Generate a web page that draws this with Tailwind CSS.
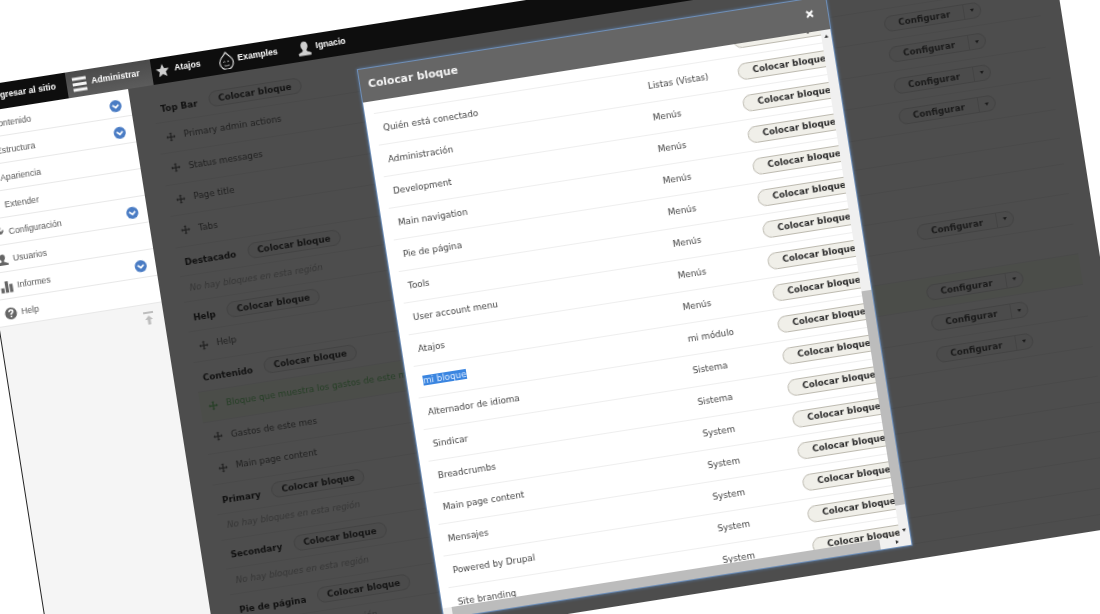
<!DOCTYPE html>
<html lang="en">
<head>
    <meta charset="UTF-8">
    <title>Bloques</title>
    <script src="https://cdn.jsdelivr.net/npm/@tailwindcss/browser@4"></script>
</head>
<body class="bg-white overflow-hidden w-[1100px] h-[614px] relative">
    <div id="page" class="absolute left-[-39px] top-[89px] w-[1099px] h-[613px] origin-top-left rotate-[-8.95deg] blur-[0.25px] flex flex-col [font-family:'DejaVu_Sans',sans-serif]">
        <!-- toolbar -->
        <div class="h-[26px] shrink-0 bg-[#0e0e0e] flex items-stretch text-white font-bold text-[8.7px] [font-family:'Liberation_Sans',sans-serif]">
            <div class="w-[105px] flex items-center justify-end pr-[11px]">Regresar al sitio</div>
            <div class="w-[86px] flex items-center pl-[6px] gap-[5px] bg-gradient-to-b from-[#4a4a4a] to-[#5c5c5c]">
                <svg class="w-[14px] h-[15px]" viewBox="0 0 14 15" fill="#f2f2f2"><rect x="0" y="0.500" width="14" height="3"/><rect x="0" y="6" width="14" height="3"/><rect x="0" y="11.500" width="14" height="3"/></svg>
                <span>Administrar</span>
            </div>
            <div class="w-[64px] flex items-center pl-[4px] gap-[5px]">
                <svg class="w-[14px] h-[14px]" viewBox="0 0 24 24" fill="#cfcfcf"><path d="M12 1l3.300 7.400 8 .8-6 5.400 1.800 7.900L12 18.400l-7.100 4.100 1.800-7.900-6-5.400 8-.8z"/></svg>
                <span>Atajos</span>
            </div>
            <div class="w-[78px] flex items-center pl-[4px] gap-[4px]">
                <svg class="w-[15px] h-[18px]" viewBox="0 0 20 24" fill="none" stroke="#e6e6e6" stroke-width="1.500"><path d="M10 1c1 4 9 7 9 14a9 9 0 0 1-18 0c0-7 8-10 9-14z"/><path d="M5.500 14.500c1-1.500 2-1.500 3-.7M11 13.500h2.500M6.500 18.500c2 1 4.500 1 7 0" stroke-width="1"/></svg>
                <span>Examples</span>
            </div>
            <div class="flex items-center pl-[6px] gap-[5px]">
                <svg class="w-[13px] h-[15px]" viewBox="0 0 24 26" fill="#cfcfcf"><path d="M12 0c4.500 0 6.500 3.500 6.500 8 0 3-1.700 5.500-3 7.500 0 2.500 1 3.500 8 6v4.500H.5v-4.500c7-2.500 8-3.500 8-6-1.300-2-3-4.500-3-7.500 0-4.500 2-8 6.500-8z"/></svg>
                <span>Ignacio</span>
            </div>
        </div>

        <div class="flex flex-1 min-h-0">
            <!-- admin tray -->
            <div class="w-[165px] shrink-0 bg-[#f5f5f5] border-l border-[#222] flex flex-col">
                <div id="tray" class="bg-white text-[8.7px] text-[#565656] [font-family:'Liberation_Sans',sans-serif]"></div>
                <div class="flex justify-end pr-[10px] pt-[7px]">
                    <svg class="w-[10px] h-[14px]" viewBox="0 0 10 14" fill="#bdbdbd"><rect x="0" y="0" width="10" height="2"/><path d="M5 4l4 4H6.500v5h-3V8H1z"/></svg>
                </div>
            </div>
            <!-- block layout behind the overlay -->
            <div id="regions" class="flex-1 bg-[#4d4d4d] pl-[22px] pr-[21px] pt-[9px] text-[8.8px] text-[#1f1f1f]"></div>
        </div>

        <!-- dialog -->
        <div class="absolute left-[394px] top-[42px] w-[475px] h-[557px] flex flex-col bg-white border border-[#6f8fb8] shadow-[0_0_3px_#5b7ba6]">
            <div class="h-[33px] shrink-0 bg-[#666] flex items-center justify-between pl-[8px] pr-[14px] relative z-10">
                <span class="text-[10.8px] font-bold text-[#f5f5f5]">Colocar bloque</span>
                <svg class="w-[8px] h-[8px] mb-[3px]" viewBox="0 0 8 8" stroke="#fff" stroke-width="2"><path d="M1 1l6 6M7 1L1 7"/></svg>
            </div>
            <div class="flex flex-1 min-h-0">
                <div class="flex-1 min-w-0 overflow-hidden">
                    <div id="rows" class="mt-[-19px] ml-[9px] text-[8.8px] text-[#444]"></div>
                </div>
                <div class="w-[10px] shrink-0 bg-[#f0f0f0] flex flex-col">
                    <div class="h-[12px] flex items-center justify-center"><div class="border-x-[2.5px] border-b-[3px] border-x-transparent border-b-[#333]"></div></div>
                    <div class="h-[252px]"></div>
                    <div class="h-[217px] bg-[#bcbcbc]"></div>
                    <div class="flex-1"></div>
                    <div class="h-[12px] flex items-center justify-center"><div class="border-x-[2.5px] border-t-[3px] border-x-transparent border-t-[#333]"></div></div>
                </div>
            </div>
            <div class="h-[10px] shrink-0 bg-[#f0f0f0] flex">
                <div class="w-[9px]"></div>
                <div class="w-[433px] bg-[#bcbcbc]"></div>
                <div class="flex-1 flex items-center justify-end pr-[2px]"><div class="border-y-[2.5px] border-l-[3px] border-y-transparent border-l-[#333]"></div></div>
                <div class="w-[10px]"></div>
            </div>
        </div>
    </div>

    <script>
        const iconPaths = {
            content: 'M4 2h16v20H4z',
            wrench: 'M21 6l-4 4-3-3 4-4a6 6 0 0 0-8 8L2 19l3 3 8-8a6 6 0 0 0 8-8z',
            user: 'M12 2c4 0 5 3 5 6s-2 5-3 6c0 2 1 2 8 5v3H2v-3c7-3 8-3 8-5-1-1-3-3-3-6s1-6 5-6z',
            bars: 'M1 14h6v9H1zM9 2h6v21H9zM17 8h6v15h-6z',
            help: 'M12 1a11 11 0 1 0 0 22 11 11 0 0 0 0-22zm1.500 18h-3v-3h3zm2.200-7.600c-1.200 1-2.200 1.600-2.200 3.100h-3c0-2.700 1.300-3.500 2.500-4.500.8-.6 1.200-1 1.200-1.800 0-.9-.7-1.500-1.800-1.500S10.600 7.400 10.500 9h-3c.1-3 2-4.900 5-4.900 2.800 0 4.800 1.600 4.800 4 0 1.500-.7 2.400-1.600 3.300z'
        };

        const trayItems = [
            { label: 'Contenido', icon: 'content', more: true },
            { label: 'Estructura', icon: 'bars', more: true },
            { label: 'Apariencia', icon: 'content' },
            { label: 'Extender', icon: 'content' },
            { label: 'Configuración', icon: 'wrench', more: true },
            { label: 'Usuarios', icon: 'user' },
            { label: 'Informes', icon: 'bars', more: true },
            { label: 'Help', icon: 'help' }
        ];

        document.getElementById('tray').innerHTML = trayItems.map(item => `
            <div class="h-[27px] flex items-center pl-[7px] pr-[9px] pt-[3px] gap-[4px] border-b border-[#e8e8e8]">
                <svg class="w-[13px] h-[13px] shrink-0" viewBox="0 0 24 24" fill="#666"><path d="${iconPaths[item.icon]}"/></svg>
                <span>${item.label}</span>
                ${item.more ? `<svg class="w-[12px] h-[12px] ml-auto" viewBox="0 0 12 12"><circle cx="6" cy="6" r="6" fill="#4a7cc4"/><path d="M3 4.800l3 2.800 3-2.800" fill="none" stroke="#fff" stroke-width="1.800"/></svg>` : ''}
            </div>
        `).join('');

        const moveIcon = fill => `<svg class="w-[10px] h-[10px] shrink-0" viewBox="0 0 24 24" fill="${fill}"><path d="M12 1l4 4h-2.500v5.500H19V8l4 4-4 4v-2.500h-5.500V19H16l-4 4-4-4h2.500v-5.500H5V16l-4-4 4-4v2.500h5.500V5H8z"/></svg>`;

        const configBtn = `
            <div class="ml-auto mr-[58px] w-[98px] h-[16px] flex rounded-full border border-[#434343] bg-[#4b4b4b] font-bold text-[#1a1a1a]">
                <span class="flex-1 text-center leading-[14px]">Configurar</span>
                <span class="w-[17px] border-l border-[#434343] flex items-center justify-center"><span class="border-x-[2.5px] border-t-[3px] border-x-transparent border-t-[#1a1a1a]"></span></span>
            </div>`;

        const regions = [
            { name: 'Top Bar', items: [{ t: 'Primary admin actions', cfg: 1 }, { t: 'Status messages', cfg: 1 }, { t: 'Page title', cfg: 1 }, { t: 'Tabs', cfg: 1 }] },
            { name: 'Destacado' },
            { name: 'Help', items: [{ t: 'Help', cfg: 1 }] },
            { name: 'Contenido', items: [{ t: 'Bloque que muestra los gastos de este mes', cfg: 1, isNew: true }, { t: 'Gastos de este mes', cfg: 1 }, { t: 'Main page content', cfg: 1 }] },
            { name: 'Primary' },
            { name: 'Secondary' },
            { name: 'Pie de página' }
        ];

        document.getElementById('regions').innerHTML = regions.map(region => `
            <div class="h-[29.500px] flex items-center gap-[11.500px] pl-[7px] border-b border-[#494949]">
                <span class="font-bold text-[#111] pt-[4px]">${region.name}</span>
                <span class="w-[94px] h-[16px] rounded-full border border-[#434343] bg-[#4b4b4b] font-bold text-[#141414] text-center leading-[14px]">Colocar bloque</span>
            </div>
            ${region.items ? region.items.map(item => `
                <div class="h-[31.500px] flex items-center gap-[8px] pl-[8px] border-b border-[#494949] ${item.isNew ? 'bg-[#4b4d49] text-[#263f26]' : ''}">
                    ${moveIcon(item.isNew ? '#263f26' : '#222')}
                    <span>${item.t}</span>
                    ${item.cfg ? configBtn : ''}
                </div>
            `).join('') : `
                <div class="h-[26px] flex items-center pl-[8px] italic text-[#363636] border-b border-[#494949]">No hay bloques en esta región</div>
            `}
        `).join('');

        const blocks = [
            ['', ''],
            ['Quién está conectado', 'Listas (Vistas)'],
            ['Administración', 'Menús'],
            ['Development', 'Menús'],
            ['Main navigation', 'Menús'],
            ['Pie de página', 'Menús'],
            ['Tools', 'Menús'],
            ['User account menu', 'Menús'],
            ['Atajos', 'Menús'],
            ['<span class="bg-[#3a85e0] text-[#dcebff]">mi bloque</span>', 'mi módulo'],
            ['Alternador de idioma', 'Sistema'],
            ['Sindicar', 'Sistema'],
            ['Breadcrumbs', 'System'],
            ['Main page content', 'System'],
            ['Mensajes', 'System'],
            ['Powered by Drupal', 'System'],
            ['Site branding', 'System']
        ];

        document.getElementById('rows').innerHTML = blocks.map(([name, category]) => `
            <div class="h-[32px] flex items-center border-b border-[#eeeeee] pl-[7px]">
                <span class="w-[268px] shrink-0">${name}</span>
                <span class="w-[91px] shrink-0">${category}</span>
                <span class="w-[103px] h-[17px] shrink-0 rounded-full border border-[#bdbab0] bg-[#f0efe9] font-bold text-[#2a2a2a] pl-[14px] leading-[15px]">Colocar bloque</span>
            </div>
        `).join('');
    </script>
</body>
</html>
